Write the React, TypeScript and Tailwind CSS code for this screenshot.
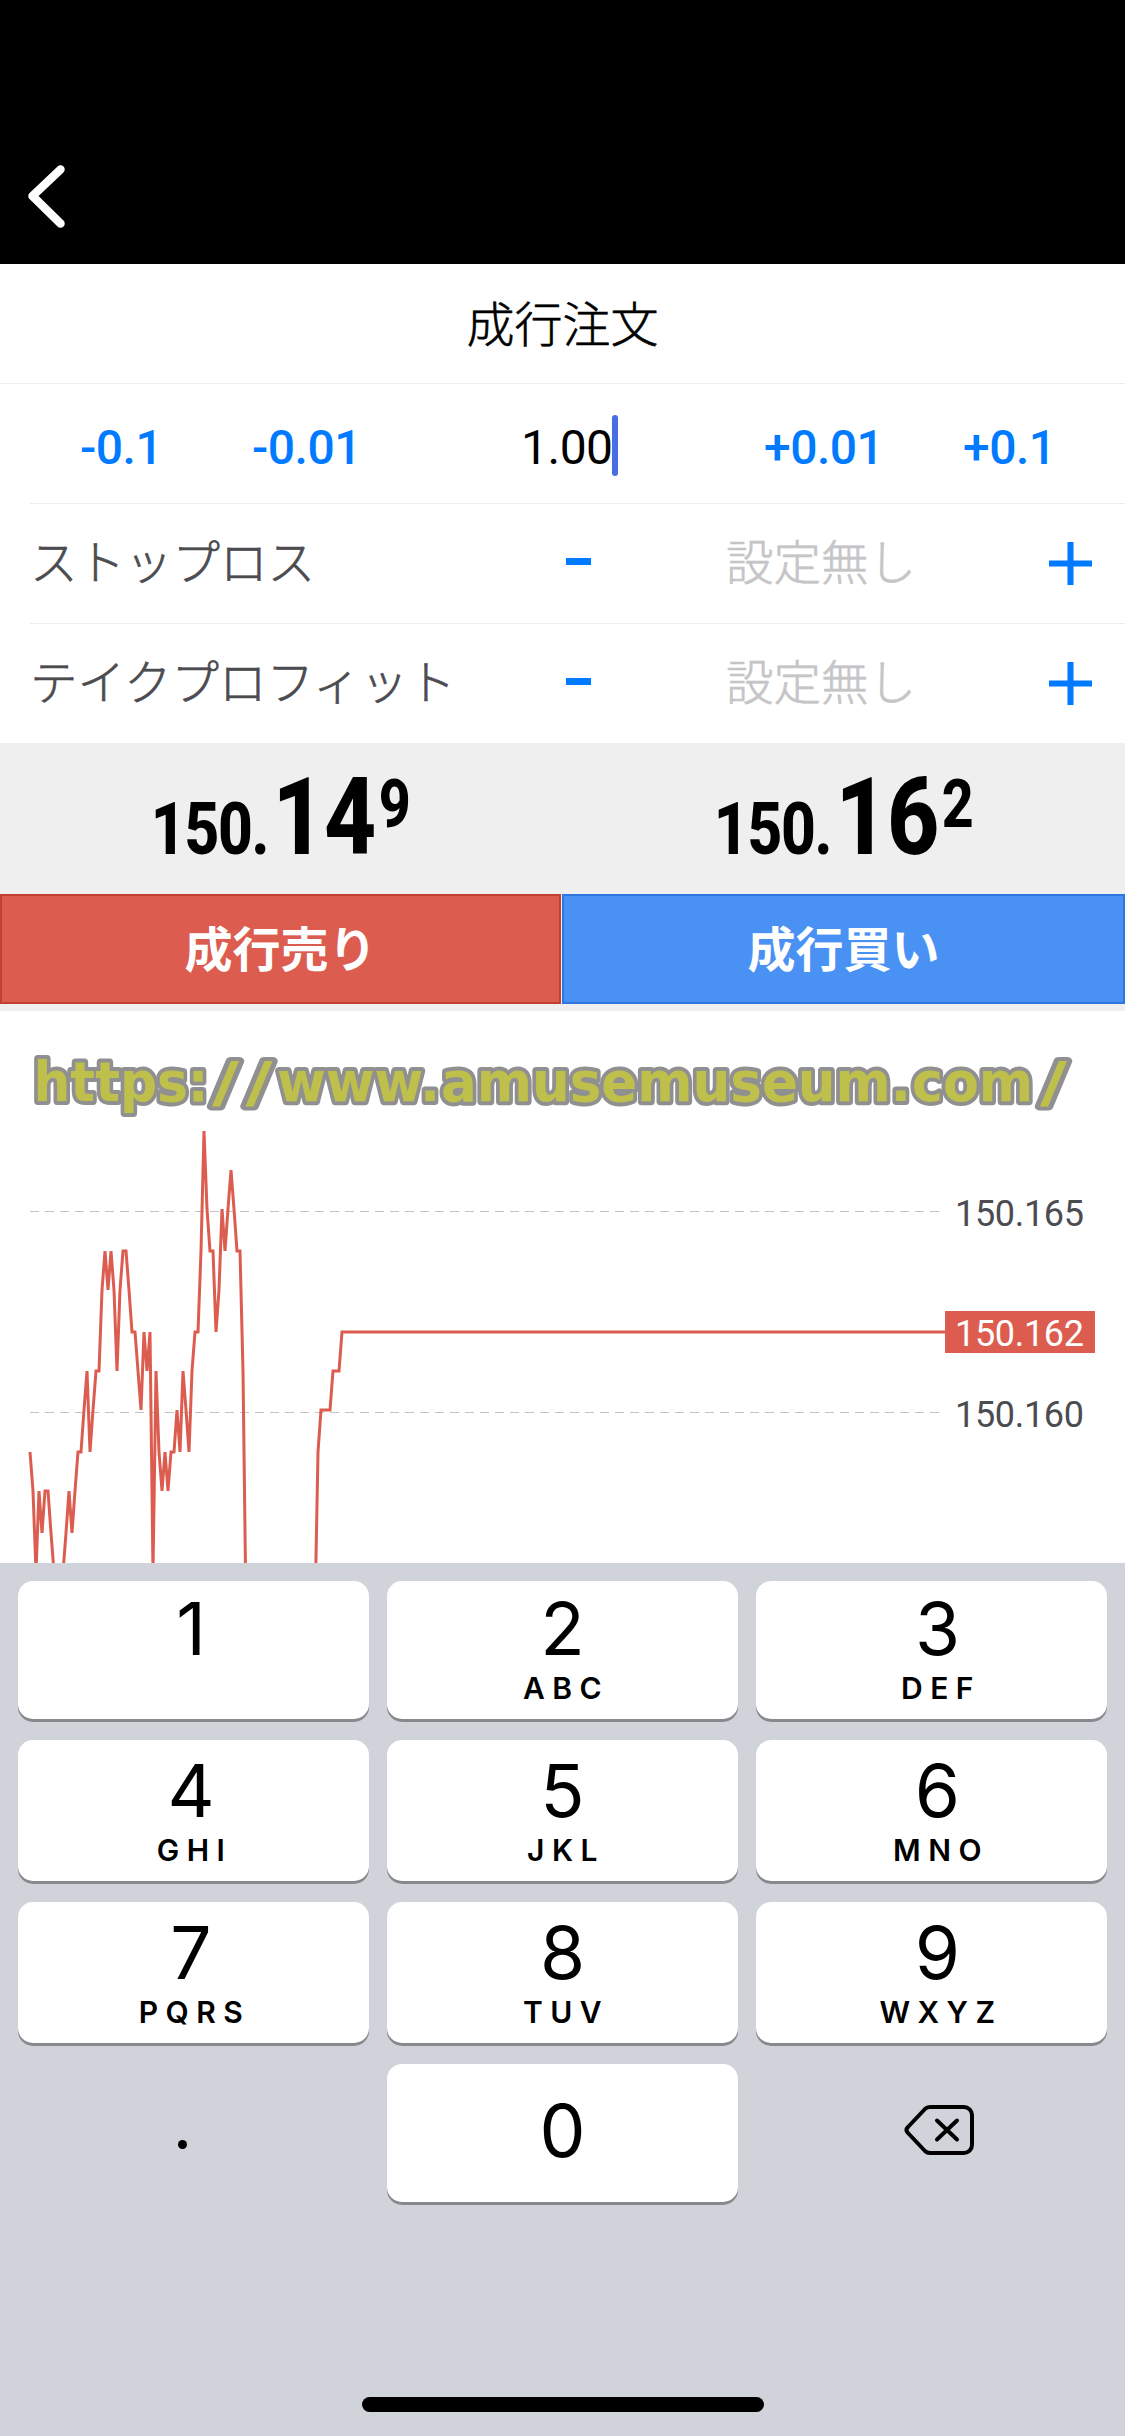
import clsx from 'clsx'

// 3px per tick, price in thousandths above 150.000
const TICKS = [
  159, 158, 156, 158, 157, 158, 158, 157, 156, 155, 155, 156, 157, 158, 157, 158, 159, 159, 160, 161,
  159, 160, 161, 161, 163, 164, 163, 164, 163, 161, 163, 164, 164, 163, 162, 162, 161, 160, 162, 161,
  162, 156, 161, 159, 158, 159, 158, 159, 159, 160, 159, 161, 160, 159, 161, 162, 162, 164, 167, 165,
  164, 164, 162, 163, 165, 164, 165, 166, 165, 164, 164, 161, 155,
]
const TICKS_AFTER_GAP = [155, 159, 160, 160, 160, 160, 161, 161, 161, 162]
const GAP_END = 95

const priceToY = (price: number) => 3 * Math.floor((321 + (162 - price) * 40.2) / 3)

const toPoints = (ticks: number[], start: number) =>
  ticks.map((price, i) => `${30 + (start + i) * 3},${priceToY(price)}`).join(' ')

const SITE_URL = [
  { text: 'https:', x: 33.5, width: 175 },
  { text: '/', x: 212, width: 27 },
  { text: '/', x: 245.5, width: 27 },
  { text: 'www.', x: 277, width: 163 },
  { text: 'amusemuseum.', x: 441, width: 470 },
  { text: 'com', x: 912, width: 121 },
  { text: '/', x: 1040, width: 27 },
]

const KEY_ROWS = [
  {
    height: 'h-[138px]',
    pad: 'pt-[10px]',
    keys: [
      { digit: '1', letters: '' },
      { digit: '2', letters: 'ABC' },
      { digit: '3', letters: 'DEF' },
    ],
  },
  {
    height: 'h-[141px]',
    pad: 'pt-[13px]',
    keys: [
      { digit: '4', letters: 'GHI' },
      { digit: '5', letters: 'JKL' },
      { digit: '6', letters: 'MNO' },
    ],
  },
  {
    height: 'h-[141px]',
    pad: 'pt-[13px]',
    keys: [
      { digit: '7', letters: 'PQRS' },
      { digit: '8', letters: 'TUV' },
      { digit: '9', letters: 'WXYZ' },
    ],
  },
]

// the outer columns sit slightly off the middle of their keys
const COLUMN_SHIFT = ['pr-[5px]', '', 'pl-[12px]']

function Header() {
  return (
    <header className="flex h-[264px] items-end bg-black pb-8 pl-6">
      <button aria-label="戻る">
        <svg width="46" height="72" viewBox="0 0 46 72" fill="none" className="block">
          <path d="M36.5 9.5 8.5 36l28 27.5" stroke="#fff" strokeWidth="8.5" strokeLinecap="round" strokeLinejoin="round" />
        </svg>
      </button>
    </header>
  )
}

function VolumeRow() {
  return (
    <div className="flex h-[119px] items-center pt-[8px] font-['Roboto','Liberation_Sans',sans-serif] text-[48px] leading-none font-medium tracking-[-0.5px] text-[#007aff]">
      <button className="ml-[80px] w-[172px] text-left">-0.1</button>
      <button className="w-[269px] text-left">-0.01</button>
      <div className="flex w-[243px] items-center font-normal text-black">
        <span>1.00</span>
        <span className="-mt-[5px] -ml-[1px] h-[61px] w-[6px] rounded-full bg-[#4a6de5]" />
      </div>
      <button className="w-[199px] text-left">+0.01</button>
      <button>+0.1</button>
    </div>
  )
}

function StepperRow({ label }: { label: string }) {
  return (
    <div className="ml-[30px] flex h-[120px] items-center border-t border-[#ececec] text-[48px] leading-none">
      <span className="w-[536px] pb-[7px] text-[47.5px] text-[#4b4b50]">{label}</span>
      <button aria-label="減らす" className="w-[160px] pb-[4px]">
        <svg width="25" height="7" className="block">
          <rect width="25" height="7" fill="#007aff" />
        </svg>
      </button>
      <span className="w-[323px] pb-[7px] text-[47.5px] text-[#c5c5c7]">設定無し</span>
      <button aria-label="増やす">
        <svg width="43" height="43" viewBox="0 0 43 43" className="block">
          <path d="M0 21.5h43M21.5 0v43" stroke="#007aff" strokeWidth="6" />
        </svg>
      </button>
    </div>
  )
}

function Price({ base, pips, point }: { base: string; pips: string; point: string }) {
  return (
    <div className="flex h-[151px] flex-1 justify-center pt-[20px] font-['Roboto','Liberation_Sans',sans-serif] font-extrabold">
      <div className="flex scale-x-[0.84] items-baseline leading-[108px]">
        <span className="text-[72px] tracking-[-1.5px]">{base}</span>
        <span className="ml-[5px] text-[108px] tracking-[-1px]">{pips}</span>
        <span className="relative -top-[27px] ml-[4px] text-[66px]">{point}</span>
      </div>
    </div>
  )
}

function TradeButtons() {
  return (
    <div className="flex h-[117px] gap-px bg-[#efefef] pb-[7px] text-[48px] leading-none font-bold text-white">
      <button className="w-[561px] border-2 border-[#c2402f] bg-[#dc5d4f] pb-[6px]">成行売り</button>
      <button className="flex-1 border-2 border-[#2f77de] bg-[#4a91f4] pb-[6px]">成行買い</button>
    </div>
  )
}

function Chart() {
  return (
    <svg
      width="1125"
      height="552"
      viewBox="0 0 1125 552"
      fill="none"
      className="block font-['Roboto','Liberation_Sans',sans-serif] text-[36px]"
    >
      <path d="M30 200.5H942M30 401.5H942" stroke="#c4c4c4" strokeDasharray="9 6" />
      <g stroke="#dc5d4f" strokeWidth="3">
        <polyline points={toPoints(TICKS, 0)} />
        <polyline points={`${toPoints(TICKS_AFTER_GAP, GAP_END)} 945,321`} />
      </g>
      <text x="955" y="215" fill="#4b4b50" textLength="129">150.165</text>
      <text x="955" y="416" fill="#4b4b50" textLength="129">150.160</text>
      <rect x="945" y="300" width="150" height="42" fill="#dc5d4f" />
      <text x="955" y="335" fill="#fff" textLength="129">150.162</text>
      <g
        fill="#bfc04c"
        stroke="#909090"
        strokeWidth="8"
        strokeLinejoin="round"
        paintOrder="stroke"
        className="font-['DejaVu_Sans',sans-serif] text-[56px] font-bold"
      >
        {SITE_URL.map((part) => (
          <text key={part.x} x={part.x} y="90" textLength={part.width} lengthAdjust="spacingAndGlyphs">
            {part.text}
          </text>
        ))}
      </g>
    </svg>
  )
}

const KEY_SHAPE = 'w-[351px] rounded-[15px] bg-white shadow-[0_3px_0_#88898d]'

function Keypad() {
  return (
    <div className="flex h-[873px] flex-col gap-[21px] bg-[#d1d3da] px-[18px] pt-[18px] font-['Inter',sans-serif] text-black">
      {KEY_ROWS.map((row) => (
        <div key={row.keys[0].digit} className="flex gap-[18px]">
          {row.keys.map((key, column) => (
            <button
              key={key.digit}
              className={clsx('flex flex-col items-center', KEY_SHAPE, row.height, row.pad, COLUMN_SHIFT[column])}
            >
              <span className="text-[73px] leading-[76px]">{key.digit}</span>
              <span className="-mr-[7px] text-[30px] leading-[42px] font-semibold tracking-[7.5px]">{key.letters}</span>
            </button>
          ))}
        </div>
      ))}
      <div className="flex h-[138px] gap-[18px]">
        <button aria-label="." className="flex w-[351px] items-center pt-[22px] pl-[160px]">
          <span className="size-[9px] rounded-full bg-black" />
        </button>
        <button className={clsx('pb-[4px] text-[73px] leading-[76px]', KEY_SHAPE)}>0</button>
        <button aria-label="削除" className="flex w-[351px] items-center pb-[6px] pl-[148px]">
          <svg width="70" height="52" viewBox="0 0 70 52" fill="none" stroke="#000" strokeWidth="4" strokeLinecap="round" strokeLinejoin="round">
            <path d="M26 3h34a8 8 0 0 1 8 8v30a8 8 0 0 1-8 8H26q-3 0-5-2L4 29q-3-3 0-6L21 5q2-2 5-2Z" />
            <path d="m33 16.5 20 19m0-19-20 19" />
          </svg>
        </button>
      </div>
      <div className="mt-auto mb-6 h-[15px] w-[402px] self-center rounded-full bg-black" />
    </div>
  )
}

export default function App() {
  return (
    <div className="h-[2436px] w-[1125px] overflow-hidden bg-white font-['Noto_Sans_CJK_JP',sans-serif]">
      <Header />
      <h1 className="flex h-[120px] items-center justify-center border-b border-[#ececec] pb-[6px] text-[48px] leading-none font-light text-black [-webkit-text-stroke:0.6px]">
        成行注文
      </h1>
      <VolumeRow />
      <div className="font-light [-webkit-text-stroke:0.6px]">
        <StepperRow label="ストップロス" />
        <StepperRow label="テイクプロフィット" />
      </div>
      <div className="flex bg-[#efefef]">
        <Price base="150." pips="14" point="9" />
        <Price base="150." pips="16" point="2" />
      </div>
      <TradeButtons />
      <Chart />
      <Keypad />
    </div>
  )
}
